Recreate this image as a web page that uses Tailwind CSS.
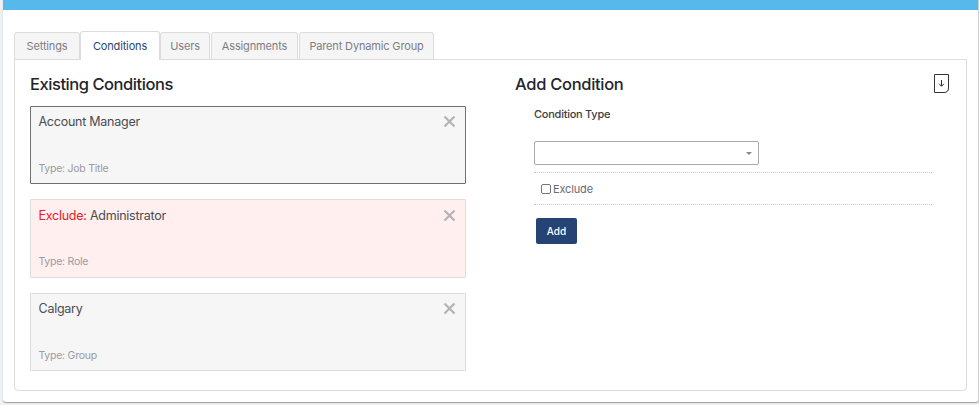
<!DOCTYPE html>
<html lang="en">
<head>
    <meta charset="UTF-8">
    <title>Dynamic Group Conditions</title>
    <script src="https://cdn.jsdelivr.net/npm/@tailwindcss/browser@4"></script>
</head>
<body class="bg-[#eef1f4] h-[405px] w-[979px] overflow-hidden font-['Inter','Liberation_Sans',sans-serif]">
    <div class="ml-[3px] w-[976px] h-[402px] bg-white border-r border-[#cfcfcf] rounded-b-[3px] shadow-[0_1px_1px_rgba(0,0,0,0.35)]">
        <div class="h-[10px] bg-[#57b8ec]"></div>

        <div class="pl-[11px] pr-[11px] pt-[21px]">
            <!-- tabs -->
            <div class="flex items-end h-[28px] text-[11px] tracking-[-0.15px] text-[#7d7d85]">
                <div class="h-[27px] w-[66px] flex items-center justify-center bg-[#f5f5f5] border border-b-0 border-[#dcdcdc] rounded-t-[3px]">Settings</div>
                <div class="h-[29px] w-[80px] -mb-px relative flex items-start pt-[6px] justify-center bg-white border border-b-0 border-[#dcdcdc] rounded-t-[3px] text-[#2c4770]">Conditions</div>
                <div class="h-[27px] w-[50px] flex items-center justify-center bg-[#f5f5f5] border border-b-0 border-[#dcdcdc] rounded-t-[3px]">Users</div>
                <div class="h-[27px] w-[87px] ml-[1px] flex items-center justify-center bg-[#f5f5f5] border border-b-0 border-[#dcdcdc] rounded-t-[3px]">Assignments</div>
                <div class="h-[27px] w-[135px] ml-[1px] flex items-center justify-center bg-[#f5f5f5] border border-b-0 border-[#dcdcdc] rounded-t-[3px]">Parent Dynamic Group</div>
            </div>

            <!-- panel -->
            <div class="h-[332px] border border-[#dcdcdc] rounded-b-[4px] flex pl-[15px] pt-[12px]">
                <div class="w-[436px]">
                    <h2 class="text-[16.5px] leading-[24px] font-medium tracking-[-0.45px] text-[#23252b]">Existing Conditions</h2>
                    <div class="mt-[10px] flex flex-col gap-[15px]">
                        <div class="h-[78px] bg-[#f6f6f6] border border-[#6f6f6f] rounded-[1px] flex flex-col justify-between pl-[7.5px] pr-[9px] pt-[6px] pb-[6px]">
                            <div class="flex justify-between items-start">
                                <span class="text-[12.5px] leading-[18px] tracking-[-0.25px] text-[#4a4c53]">Account Manager</span>
                                <svg class="w-[13px] h-[13px] mt-[2px]" viewBox="0 0 13 13"><path d="M1.5 1.5 11.5 11.5M11.5 1.5 1.5 11.5" stroke="#b4b4b4" stroke-width="2.2" fill="none"/></svg>
                            </div>
                            <span class="text-[10.5px] leading-[16px] tracking-[-0.25px] text-[#9a9aa0]">Type: Job Title</span>
                        </div>
                        <div class="h-[79px] bg-[#ffefee] border border-[#dcdcdc] rounded-[1px] flex flex-col justify-between pl-[7.5px] pr-[9px] pt-[7px] pb-[7px]">
                            <div class="flex justify-between items-start">
                                <span class="text-[12.5px] leading-[18px] tracking-[-0.25px] text-[#4a4c53]"><span class="text-[#e8202a]">Exclude:</span> Administrator</span>
                                <svg class="w-[13px] h-[13px] mt-[2px]" viewBox="0 0 13 13"><path d="M1.5 1.5 11.5 11.5M11.5 1.5 1.5 11.5" stroke="#b4b4b4" stroke-width="2.2" fill="none"/></svg>
                            </div>
                            <span class="text-[10.5px] leading-[16px] tracking-[-0.25px] text-[#9a9aa0]">Type: Role</span>
                        </div>
                        <div class="h-[78px] bg-[#f6f6f6] border border-[#dcdcdc] rounded-[1px] flex flex-col justify-between pl-[7.5px] pr-[9px] pt-[6px] pb-[6px]">
                            <div class="flex justify-between items-start">
                                <span class="text-[12.5px] leading-[18px] tracking-[-0.25px] text-[#4a4c53]">Calgary</span>
                                <svg class="w-[13px] h-[13px] mt-[2px]" viewBox="0 0 13 13"><path d="M1.5 1.5 11.5 11.5M11.5 1.5 1.5 11.5" stroke="#b4b4b4" stroke-width="2.2" fill="none"/></svg>
                            </div>
                            <span class="text-[10.5px] leading-[16px] tracking-[-0.25px] text-[#9a9aa0]">Type: Group</span>
                        </div>
                    </div>
                </div>

                <div class="ml-[49px] w-[436px]">
                    <div class="flex justify-between items-start">
                        <h2 class="text-[16.5px] leading-[24px] font-medium tracking-[-0.3px] text-[#23252b]">Add Condition</h2>
                        <svg class="w-[15px] h-[19px] mt-[2px] mr-[2px]" viewBox="0 0 15 19" fill="none" stroke="#333"><path d="M.5.5H14.500V14Q14.500 18.500 10 18.500H.5Z"/><path d="M7.500 6V12M5 9.800 7.500 12.300 10 9.800"/></svg>
                    </div>
                    <div class="ml-[19px] w-[398px]">
                        <div class="mt-[10px] text-[11px] leading-[16px] font-medium tracking-[-0.25px] text-[#3c3e46]">Condition Type</div>
                        <div class="mt-[19px] w-[225px] h-[24px] border border-[#a9a9a9] rounded-[2px] flex items-center justify-end pr-[6px]">
                            <span class="w-0 h-0 border-x-[3px] border-x-transparent border-t-[3px] border-t-[#888]"></span>
                        </div>
                        <div class="mt-[7px] h-[33px] border-y border-dotted border-[#c8c8c8] flex items-center pl-[7px] gap-[2px]">
                            <input type="checkbox" class="w-[10px] h-[10px] appearance-none border border-[#767676] rounded-[2px] bg-white">
                            <span class="text-[11px] tracking-[-0.15px] pt-[1px] text-[#6b6b78]">Exclude</span>
                        </div>
                        <button class="mt-[13px] ml-[2px] w-[41px] h-[26px] bg-[#254474] rounded-[2px] text-white text-[10px] font-medium">Add</button>
                    </div>
                </div>
            </div>
        </div>
    </div>
</body>
</html>
